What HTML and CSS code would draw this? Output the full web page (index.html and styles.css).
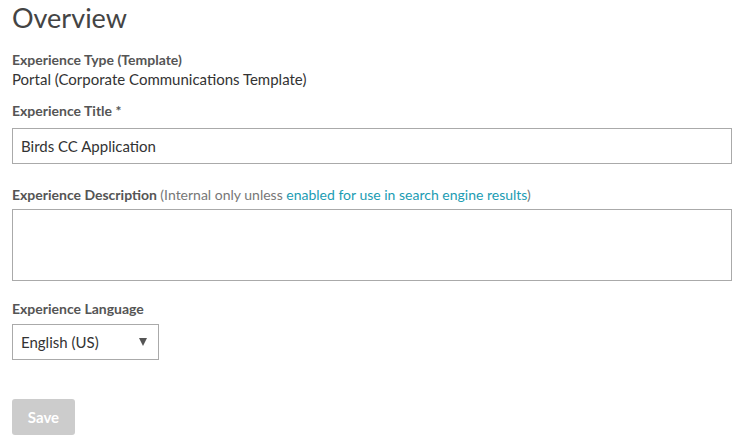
FILE: index.html
```html
<!DOCTYPE html>
<html>
<head>
<meta charset="utf-8">
<link rel="stylesheet" href="styles.css">
</head>
<body>
<div class="page">
  <h1 class="title">Overview</h1>
  <div class="field field-static">
    <div class="label">Experience Type (Template)</div>
    <div class="value">Portal (Corporate Communications Template)</div>
  </div>
  <div class="field field-title">
    <div class="label">Experience Title<span class="req"> *</span></div>
    <div class="input">Birds CC Application</div>
  </div>
  <div class="field field-desc">
    <div class="label">Experience Description <span class="hint">(Internal only unless <a class="link">enabled for use in search engine results</a>)</span></div>
    <div class="textarea"></div>
  </div>
  <div class="field field-lang">
    <div class="label">Experience Language</div>
    <div class="select"><span>English (US)</span><span class="arrow"></span></div>
  </div>
  <div class="actions">
    <button class="btn-save">Save</button>
  </div>
</div>
</body>
</html>
```
FILE: styles.css
```css
* { box-sizing: border-box; }
html, body { margin: 0; padding: 0; background: #fff; }
body { font-family: Lato, "Noto Sans", sans-serif; color: #333; }
.page { padding: 0 12px; width: 744px; }
.title {
  margin: 0;
  font-weight: 400;
  font-size: 27px;
  line-height: 32px;
  color: #444;
  padding-top: 2px;
}
.field-static { margin-top: 17px; }
.field-title { margin-top: 13px; }
.field-desc { margin-top: 22px; }
.field-lang { margin-top: 19px; }
.label {
  font-size: 14px;
  line-height: 18px;
  font-weight: 700;
  color: #555;
}
.value { font-size: 15px; line-height: 20px; color: #333; }
.req { font-weight: 700; }
.hint { font-weight: 400; color: #777; }
.link { color: #1b9cb3; text-decoration: none; }
.input {
  margin-top: 8px;
  width: 720px;
  height: 36px;
  border: 1px solid #aaa;
  padding: 0 8px;
  font-size: 15px;
  line-height: 34px;
  color: #333;
}
.textarea {
  margin-top: 5px;
  width: 720px;
  height: 72px;
  border: 1px solid #aaa;
}
.select {
  margin-top: 6px;
  width: 147px;
  height: 36px;
  border: 1px solid #aaa;
  padding: 0 11px 0 8px;
  font-size: 15px;
  line-height: 34px;
  color: #333;
  display: flex;
  justify-content: space-between;
  align-items: center;
}
.arrow {
  width: 0; height: 0;
  border-left: 4px solid transparent;
  border-right: 4px solid transparent;
  border-top: 8px solid #555;
}
.actions { margin-top: 39px; }
.btn-save {
  display: block;
  width: 63px;
  height: 36px;
  border: 0;
  border-radius: 3px;
  background: #ccc;
  color: #fff;
  font-family: Lato, sans-serif;
  font-weight: 700;
  font-size: 15px;
  padding: 0;
}
```
